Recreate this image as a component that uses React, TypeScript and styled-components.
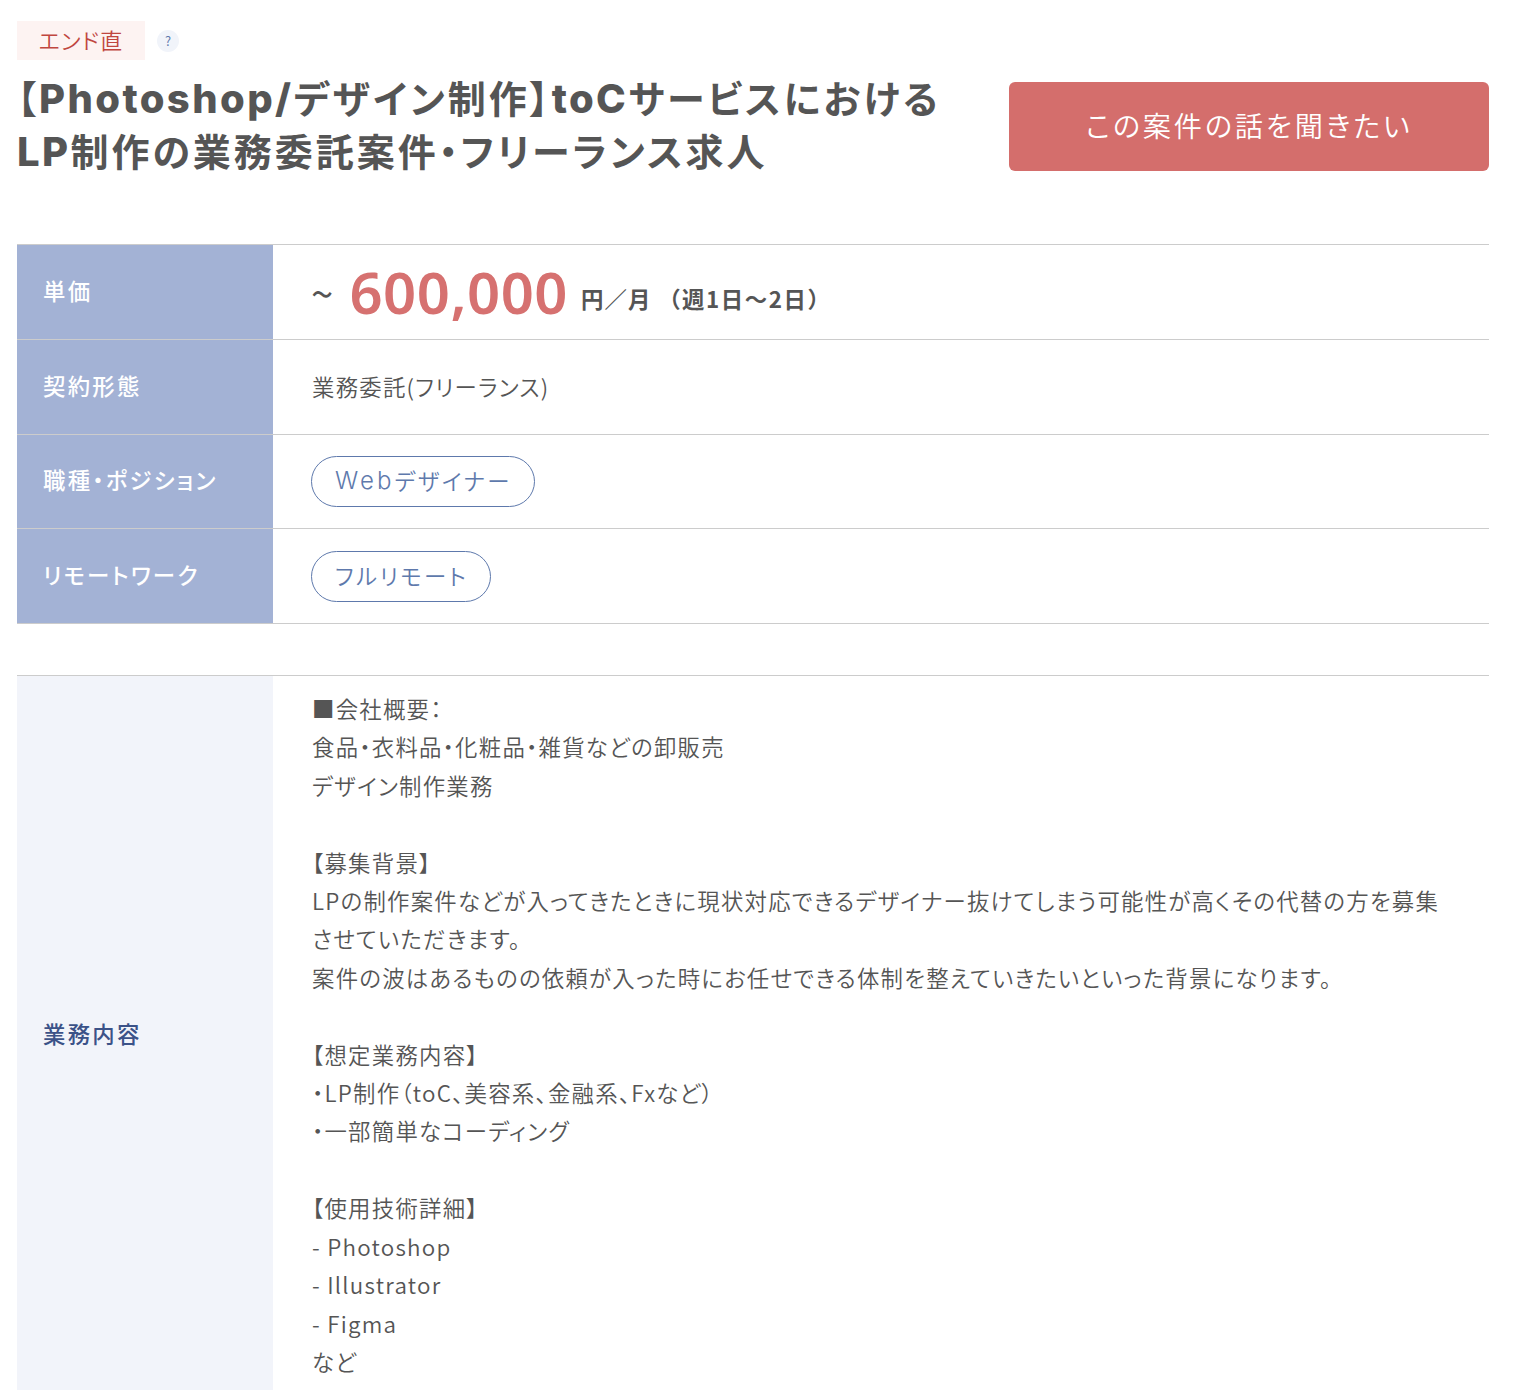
import React from 'react';
import styled, { createGlobalStyle } from 'styled-components';

const GlobalStyle = createGlobalStyle`
  html, body {
    margin: 0;
    padding: 0;
    height: 1390px;
    overflow: hidden;
    background: #fff;
  }
`;

const Page = styled.div`
  box-sizing: border-box;
  width: 1524px;
  padding: 21px 35px 0 17px;
  color: #555;
  font-family: 'Noto Sans CJK JP', 'Noto Sans', sans-serif;
  font-feature-settings: 'palt';
  font-weight: 350;
`;

const BadgeRow = styled.div`
  display: flex;
  align-items: center;
  gap: 12px;
`;

const Badge = styled.div`
  box-sizing: border-box;
  width: 128px;
  height: 39px;
  padding-bottom: 4px;
  display: flex;
  align-items: center;
  justify-content: center;
  background: #fdf3f2;
  color: #c0463f;
  font-size: 22px;
  letter-spacing: 0.05em;
`;

const Help = styled.div`
  width: 22px;
  height: 22px;
  border-radius: 50%;
  display: flex;
  align-items: center;
  justify-content: center;
  background: #f1f4fa;
  color: #5e79ac;
  font-size: 13px;
`;

const Header = styled.div`
  display: flex;
  justify-content: space-between;
  align-items: flex-start;
  margin-top: 13px;
`;

const Title = styled.h1`
  margin: 0;
  font-family: 'Inter', 'Noto Sans CJK JP', sans-serif;
  font-size: 38px;
  font-weight: 700;
  line-height: 53px;
  letter-spacing: 0.078em;
  color: #555;
`;

const TitleLatin = styled.span`
  font-size: 40px;
  line-height: 1;
  font-weight: 800;
  letter-spacing: 0.06em;
`;

const Apply = styled.button`
  width: 480px;
  height: 89px;
  margin-top: 9px;
  padding: 0 0 4px;
  border: 0;
  border-radius: 6px;
  background: #d46e6c;
  color: #fff;
  font-family: inherit;
  font-feature-settings: inherit;
  font-weight: 350;
  font-size: 28.2px;
  letter-spacing: 0.1em;
`;

const Table = styled.div<{ $gap: number }>`
  margin-top: ${(p) => p.$gap}px;
  border-top: 1px solid #ccc;
`;

const Row = styled.div`
  display: grid;
  grid-template-columns: 256px 1fr;
  border-bottom: 1px solid #ccc;
`;

const Label = styled.div<{ $light?: boolean }>`
  box-sizing: border-box;
  display: flex;
  align-items: center;
  padding: 0 0 4px 26px;
  min-height: 93.75px;
  background: ${(p) => (p.$light ? '#f2f4fa' : '#a3b2d5')};
  color: ${(p) => (p.$light ? '#3b5288' : '#fff')};
  font-size: 22.4px;
  font-weight: 500;
  letter-spacing: 0.1em;
`;

const Value = styled.div`
  display: flex;
  align-items: center;
  padding-left: 39px;
  font-size: 22.4px;
  letter-spacing: 0.056em;
`;

const ValueText = styled.span`
  margin-bottom: 2px;
`;

const Price = styled.div`
  display: flex;
  align-items: center;
  font-weight: 700;
  font-size: 22.4px;
`;

const Tilde = styled.span`
  font-size: 40px;
  font-weight: 400;
  margin: 0 15px 0 -1px;
`;

const Amount = styled.span`
  font-family: 'Noto Sans', sans-serif;
  font-size: 58px;
  line-height: 1;
  font-weight: 600;
  color: #d67170;
  letter-spacing: 0.008em;
  margin-right: 13px;
`;

const Suffix = styled.span`
  margin-top: 12px;
  white-space: pre;
  letter-spacing: 0.05em;
`;

const Period = styled.span`
  font-feature-settings: normal;
  letter-spacing: 0.07em;
`;

const Tag = styled.span`
  display: inline-flex;
  align-items: center;
  box-sizing: border-box;
  height: 51px;
  margin-left: -1px;
  padding: 0 22px 2px 23px;
  border: 1px solid #5e79ac;
  border-radius: 26px;
  color: #5e79ac;
  font-family: 'Inter', 'Noto Sans CJK JP', sans-serif;
  font-size: 22.4px;
  letter-spacing: 0.11em;
`;

const TagLatin = styled.span`
  font-size: 24px;
  letter-spacing: 0.125em;
`;

const Body = styled.div`
  padding: 13px 38px 14px 39px;
  font-size: 22.4px;
  line-height: 38.4px;
  letter-spacing: 0.056em;
  white-space: pre-wrap;
`;

const description = `■会社概要：
食品・衣料品・化粧品・雑貨などの卸販売
デザイン制作業務

【募集背景】
LPの制作案件などが入ってきたときに現状対応できるデザイナー抜けてしまう可能性が高くその代替の方を募集させていただきます。
案件の波はあるものの依頼が入った時にお任せできる体制を整えていきたいといった背景になります。

【想定業務内容】
・LP制作（toC、美容系、金融系、Fxなど）
・一部簡単なコーディング

【使用技術詳細】
- Photoshop
- Illustrator
- Figma
など`;

export default function App() {
  return (
    <Page>
      <GlobalStyle />
      <BadgeRow>
        <Badge>エンド直</Badge>
        <Help>?</Help>
      </BadgeRow>
      <Header>
        <Title>
          【<TitleLatin>Photoshop/</TitleLatin>デザイン制作】<TitleLatin>toC</TitleLatin>サービスにおける
          <br />
          <TitleLatin>LP</TitleLatin>制作の業務委託案件・フリーランス求人
        </Title>
        <Apply>この案件の話を聞きたい</Apply>
      </Header>
      <Table $gap={65}>
        <Row>
          <Label>単価</Label>
          <Value>
            <Price>
              <Tilde>~</Tilde>
              <Amount>600,000</Amount>
              <Suffix>
                円／月<Period> （週1日〜2日）</Period>
              </Suffix>
            </Price>
          </Value>
        </Row>
        <Row>
          <Label>契約形態</Label>
          <Value>
            <ValueText>業務委託(フリーランス)</ValueText>
          </Value>
        </Row>
        <Row>
          <Label>職種・ポジション</Label>
          <Value>
            <Tag>
              <TagLatin>Web</TagLatin>デザイナー
            </Tag>
          </Value>
        </Row>
        <Row>
          <Label>リモートワーク</Label>
          <Value>
            <Tag>フルリモート</Tag>
          </Value>
        </Row>
      </Table>
      <Table $gap={51}>
        <Row>
          <Label $light>業務内容</Label>
          <Body>{description}</Body>
        </Row>
      </Table>
    </Page>
  );
}
